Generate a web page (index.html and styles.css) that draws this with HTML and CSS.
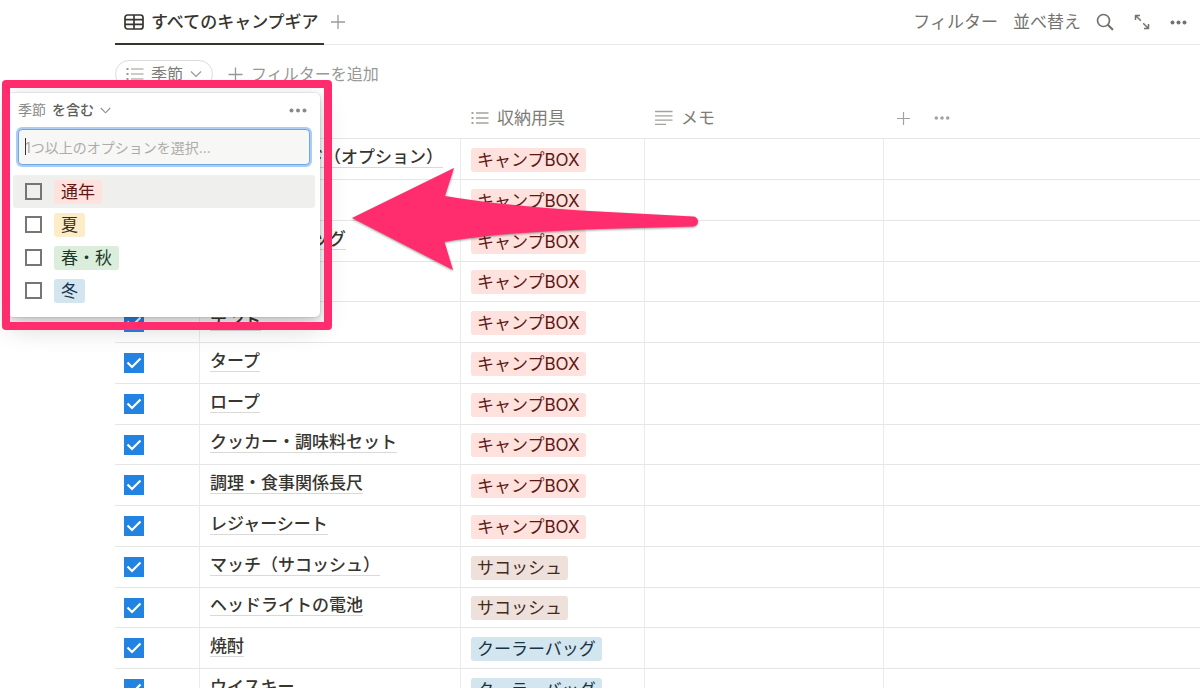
FILE: index.html
```html
<!DOCTYPE html>
<html lang="ja">
<head>
<meta charset="utf-8">
<meta name="viewport" content="width=device-width, initial-scale=1">
<title>すべてのキャンプギア</title>
<link rel="stylesheet" href="styles.css">
</head>
<body>
<main class="page">
  <header class="tabbar">
    <button class="tab" type="button">
      <svg class="tab-icon" width="20" height="16" viewBox="0 0 20 16" fill="none" stroke="currentColor" stroke-width="1.7"><rect x="1" y="1" width="18" height="14" rx="2.5"/><path d="M1 5.6h18M1 10.3h18M10 1v14"/></svg>
      <span>すべてのキャンプギア</span>
    </button>
    <button class="icon-btn add-view" type="button" aria-label="ビューを追加">
      <svg width="16" height="16" viewBox="0 0 16 16" fill="none" stroke="currentColor" stroke-width="1.3"><path d="M8 1v14M1 8h14"/></svg>
    </button>
    <div class="tools">
      <button class="tool" type="button">フィルター</button>
      <button class="tool" type="button">並べ替え</button>
      <button class="icon-btn" type="button" aria-label="検索">
        <svg width="18" height="18" viewBox="0 0 18 18" fill="none" stroke="currentColor"><circle cx="7.5" cy="7.5" r="6" stroke-width="1.7"/><path d="M12 12l4.3 4.3" stroke-width="2.2" stroke-linecap="round"/></svg>
      </button>
      <button class="icon-btn" type="button" aria-label="全画面">
        <svg width="16" height="16" viewBox="0 0 16 16" fill="none" stroke="currentColor" stroke-width="1.5" stroke-linejoin="round"><path d="M6 1.500H1.500V6M1.800 1.800l5 5M10 14.500h4.500V10M14.200 14.200L9.200 9.200"/></svg>
      </button>
      <button class="icon-btn" type="button" aria-label="その他">
        <svg width="17" height="5" viewBox="0 0 17 5" fill="currentColor"><circle cx="2.5" cy="2.5" r="2"/><circle cx="8.5" cy="2.5" r="2"/><circle cx="14.5" cy="2.5" r="2"/></svg>
      </button>
    </div>
  </header>

  <div class="filterbar">
    <button class="pill" type="button">
      <svg width="18" height="14" viewBox="0 0 18 14" fill="none" stroke="currentColor" stroke-width="1.2"><path d="M5 2h12.5M5 7h12.5M5 12h12.5"/><path d="M.5 2h2M.5 7h2M.5 12h2" stroke-width="2"/></svg>
      <span>季節</span>
      <svg width="12" height="8" viewBox="0 0 12 8" fill="none" stroke="currentColor" stroke-width="1.2"><path d="M1 1.5l5 5 5-5"/></svg>
    </button>
    <button class="add-filter" type="button">
      <svg width="15" height="15" viewBox="0 0 15 15" fill="none" stroke="currentColor" stroke-width="1.3"><path d="M7.5 .5v14M.5 7.5h14"/></svg>
      <span>フィルターを追加</span>
    </button>
  </div>

  <table class="grid">
    <colgroup><col class="c-check"><col class="c-name"><col class="c-store"><col class="c-memo"><col></colgroup>
    <thead>
      <tr>
        <th></th>
        <th></th>
        <th><div class="head"><svg width="18" height="14" viewBox="0 0 18 14" fill="none" stroke="currentColor" stroke-width="1.3"><path d="M5 2h12.5M5 7h12.5M5 12h12.5"/><path d="M.5 2h2M.5 7h2M.5 12h2" stroke-width="2"/></svg>収納用具</div></th>
        <th><div class="head"><svg width="18" height="16" viewBox="0 0 18 16" fill="none" stroke="currentColor" stroke-width="1.3"><path d="M0 1.5h17.5M0 5.8h17.5M0 10.1h17.5M0 14.4h11"/></svg>メモ</div></th>
        <th><div class="head head-actions">
          <button class="icon-btn" type="button" aria-label="列を追加"><svg width="13" height="13" viewBox="0 0 13 13" fill="none" stroke="currentColor" stroke-width="1.2"><path d="M6.5 0v13M0 6.5h13"/></svg></button>
          <button class="icon-btn" type="button" aria-label="列の設定"><svg width="16" height="4" viewBox="0 0 16 4" fill="currentColor"><circle cx="2.3" cy="2" r="1.8"/><circle cx="8" cy="2" r="1.8"/><circle cx="13.7" cy="2" r="1.8"/></svg></button>
        </div></th>
      </tr>
    </thead>
    <tbody>
      <tr><td><input class="tick" type="checkbox" checked aria-label="A型用スタンド"></td><td><a class="name" href="#">A型用スタンド（オプション）</a></td><td><span class="tag red">キャンプBOX</span></td><td></td><td></td></tr>
      <tr><td><input class="tick" type="checkbox" checked aria-label="マット"></td><td><a class="name" href="#">マット</a></td><td><span class="tag red">キャンプBOX</span></td><td></td><td></td></tr>
      <tr><td><input class="tick" type="checkbox" checked aria-label="ショルダーバッグ"></td><td><a class="name" href="#">ショルダーバッグ</a></td><td><span class="tag red">キャンプBOX</span></td><td></td><td></td></tr>
      <tr><td><input class="tick" type="checkbox" checked aria-label="シュラフ"></td><td><a class="name" href="#">シュラフ</a></td><td><span class="tag red">キャンプBOX</span></td><td></td><td></td></tr>
      <tr><td><input class="tick" type="checkbox" checked aria-label="テント"></td><td><a class="name" href="#">テント</a></td><td><span class="tag red">キャンプBOX</span></td><td></td><td></td></tr>
      <tr><td><input class="tick" type="checkbox" checked aria-label="タープ"></td><td><a class="name" href="#">タープ</a></td><td><span class="tag red">キャンプBOX</span></td><td></td><td></td></tr>
      <tr><td><input class="tick" type="checkbox" checked aria-label="ロープ"></td><td><a class="name" href="#">ロープ</a></td><td><span class="tag red">キャンプBOX</span></td><td></td><td></td></tr>
      <tr><td><input class="tick" type="checkbox" checked aria-label="クッカー・調味料セット"></td><td><a class="name" href="#">クッカー・調味料セット</a></td><td><span class="tag red">キャンプBOX</span></td><td></td><td></td></tr>
      <tr><td><input class="tick" type="checkbox" checked aria-label="調理・食事関係長尺"></td><td><a class="name" href="#">調理・食事関係長尺</a></td><td><span class="tag red">キャンプBOX</span></td><td></td><td></td></tr>
      <tr><td><input class="tick" type="checkbox" checked aria-label="レジャーシート"></td><td><a class="name" href="#">レジャーシート</a></td><td><span class="tag red">キャンプBOX</span></td><td></td><td></td></tr>
      <tr><td><input class="tick" type="checkbox" checked aria-label="マッチ（サコッシュ）"></td><td><a class="name" href="#">マッチ（サコッシュ）</a></td><td><span class="tag brown">サコッシュ</span></td><td></td><td></td></tr>
      <tr><td><input class="tick" type="checkbox" checked aria-label="ヘッドライトの電池"></td><td><a class="name" href="#">ヘッドライトの電池</a></td><td><span class="tag brown">サコッシュ</span></td><td></td><td></td></tr>
      <tr><td><input class="tick" type="checkbox" checked aria-label="焼酎"></td><td><a class="name" href="#">焼酎</a></td><td><span class="tag blue">クーラーバッグ</span></td><td></td><td></td></tr>
      <tr><td><input class="tick" type="checkbox" checked aria-label="ウイスキー"></td><td><a class="name" href="#">ウイスキー</a></td><td><span class="tag blue">クーラーバッグ</span></td><td></td><td></td></tr>
    </tbody>
  </table>

  <section class="popup" aria-label="季節フィルター">
    <div class="popup-head">
      <span class="popup-prop">季節</span>
      <button class="popup-cond" type="button">を含む
        <svg width="11" height="7" viewBox="0 0 11 7" fill="none" stroke="currentColor" stroke-width="1.1"><path d="M.8 1l4.7 4.8L10.2 1"/></svg>
      </button>
      <button class="icon-btn popup-more" type="button" aria-label="その他"><svg width="18" height="5" viewBox="0 0 18 5" fill="currentColor"><circle cx="2.5" cy="2.5" r="2"/><circle cx="9" cy="2.5" r="2"/><circle cx="15.5" cy="2.5" r="2"/></svg></button>
    </div>
    <div class="search">
      <input class="search-input" type="text" aria-label="オプションを選択" placeholder="1つ以上のオプションを選択...">
      <span class="caret"></span>
    </div>
    <div class="options">
      <label class="option active"><input class="box" type="checkbox"><span class="tag red">通年</span></label>
      <label class="option"><input class="box" type="checkbox"><span class="tag yellow">夏</span></label>
      <label class="option"><input class="box" type="checkbox"><span class="tag green">春・秋</span></label>
      <label class="option"><input class="box" type="checkbox"><span class="tag blue">冬</span></label>
    </div>
  </section>

  <div class="frame"></div>
  <svg class="arrow" width="360" height="116" viewBox="345 160 360 116"><path fill="#ff2d6e" d="M352 218L454 168L445 196Q497 205 580 210.500L693 216.500A5 5 0 0 1 693 226.500L600 229Q500 232 444.500 242L453 270Z"/></svg>
</main>
</body>
</html>
```

FILE: styles.css
```css
* { box-sizing: border-box; }

body {
  margin: 0;
  background: #fff;
  color: #37352f;
  font-family: Inter, "Noto Sans CJK JP", sans-serif;
  font-size: 17px;
  line-height: 24px;
}

button {
  display: flex;
  align-items: center;
  margin: 0;
  padding: 0;
  border: 0;
  background: none;
  color: inherit;
  font: inherit;
  white-space: nowrap;
}

svg { display: block; flex: none; }

.page {
  position: relative;
  height: 100vh;
  padding-left: 115px;
  overflow: hidden;
}

/* View tabs and tools */
.tabbar {
  display: flex;
  height: 45px;
  border-bottom: 1px solid #e9e9e8;
}

.tab {
  height: 45px;
  gap: 7px;
  padding: 0 5px 0 9px;
  border-bottom: 2px solid #37352f;
  font-weight: 500;
}

.add-view { margin-left: 6px; color: #9b9a97; }

.tools {
  display: flex;
  align-items: center;
  gap: 20px;
  margin-left: auto;
  padding-right: 13px;
  color: #73726e;
}

.tool { margin-right: -5px; }

/* Active filters */
.filterbar {
  display: flex;
  align-items: center;
  gap: 15px;
  padding-top: 15px;
  color: #999896;
}

.pill {
  height: 28px;
  gap: 7px;
  padding: 0 10px;
  border: 1px solid #dcdcda;
  border-radius: 14px;
  font-size: 16px;
}

.pill span { color: #7d7c78; }
.add-filter { gap: 8px; font-size: 16px; }

/* Data table */
.grid {
  width: 100%;
  margin-top: 10px;
  border-collapse: separate;
  border-spacing: 0;
  table-layout: fixed;
}

.c-check { width: 85px; }
.c-name { width: 261px; }
.c-store { width: 184px; }
.c-memo { width: 239px; }

.grid th {
  height: 41px;
  padding: 0 10px;
  border-bottom: 1px solid #e6e6e5;
  color: #8a8986;
  font-weight: 400;
}

.head { display: flex; align-items: center; gap: 8px; color: #7d7c78; }
.head svg { color: #a3a29f; }
.head-actions { gap: 24px; padding-left: 3px; }

.grid td {
  height: 41px;
  padding: 0 10px;
  border-right: 1px solid #ebebea;
  border-bottom: 1px solid #e6e6e5;
  white-space: nowrap;
}

.grid tr:nth-child(4n) td { height: 40px; }
.grid td:first-child { padding-left: 9px; }
.grid td:nth-child(2) { padding-bottom: 3px; }
.grid td:last-child { border-right: 0; }

.name {
  display: block;
  width: fit-content;
  height: 20px;
  border-bottom: 1px solid #d9d9d7;
  color: #37352f;
  font-weight: 500;
  line-height: 18px;
  text-decoration: none;
}

.tag {
  display: inline-block;
  height: 24px;
  padding: 0 6px;
  border-radius: 3px;
  line-height: 24px;
  vertical-align: middle;
}

.red { background: #ffe2dd; color: #5d1715; }
.brown { background: #eee0da; color: #442a1e; }
.blue { background: #d3e5ef; color: #183347; }
.yellow { background: #fdecc8; color: #402c1b; }
.green { background: #dbeddb; color: #1c3829; }

.tick {
  display: block;
  width: 20px;
  height: 20px;
  margin: 0;
  appearance: none;
  background: #2383e2 url("data:image/svg+xml,%3Csvg xmlns='http://www.w3.org/2000/svg' viewBox='0 0 20 20'%3E%3Cpath d='M3.500 9.500L8 14L16.500 5.500' fill='none' stroke='white' stroke-width='2.200'/%3E%3C/svg%3E");
}

/* Filter popup */
.popup {
  position: absolute;
  top: 93px;
  left: 8px;
  width: 312px;
  padding: 5px 5px 10px;
  border-radius: 5px;
  background: #fff;
  box-shadow: 0 0 0 1px rgba(15, 15, 15, .06), 0 3px 6px rgba(15, 15, 15, .12), 0 9px 28px rgba(15, 15, 15, .2);
}

.popup-head {
  display: flex;
  align-items: center;
  gap: 6px;
  padding: 0 8px 0 5px;
  color: #8a8986;
  font-size: 14px;
}

.popup-cond { gap: 6px; color: #605f5b; font-weight: 500; }
.popup-cond svg { color: #8f8e8b; }
.popup-more { margin-left: auto; }

.search { position: relative; padding: 7px 5px 10px; }

.search-input {
  display: block;
  width: 100%;
  height: 36px;
  padding: 0 6px;
  border: 1px solid #6fa8e8;
  border-radius: 4px;
  outline: 0;
  background: #f7f7f5;
  box-shadow: 0 0 0 2px #abcdf5;
  font: inherit;
  font-size: 14px;
}

.search-input::placeholder { color: #adaca9; opacity: 1; }

.caret {
  position: absolute;
  top: 16px;
  left: 12px;
  width: 1px;
  height: 17px;
  background: #37352f;
}

.options { display: flex; flex-direction: column; }

.option {
  display: flex;
  align-items: center;
  gap: 12px;
  height: 33px;
  padding: 0 12px;
  border-radius: 3px;
}

.option .tag { padding: 0 7px; }

.active { background: #efefee; }

.box {
  width: 17px;
  height: 17px;
  margin: 0;
  appearance: none;
  border: 2px solid #777673;
  background: #fff;
}

.active .box { background: transparent; }

/* Callouts over the page */
.frame {
  position: absolute;
  top: 80px;
  left: 2px;
  width: 330px;
  height: 250px;
  border: 8px solid #ff2d6e;
  border-radius: 4px;
  pointer-events: none;
}

.arrow {
  position: absolute;
  top: 160px;
  left: 345px;
  filter: drop-shadow(0 1px 1px rgba(0, 0, 0, .4));
  pointer-events: none;
}
```
